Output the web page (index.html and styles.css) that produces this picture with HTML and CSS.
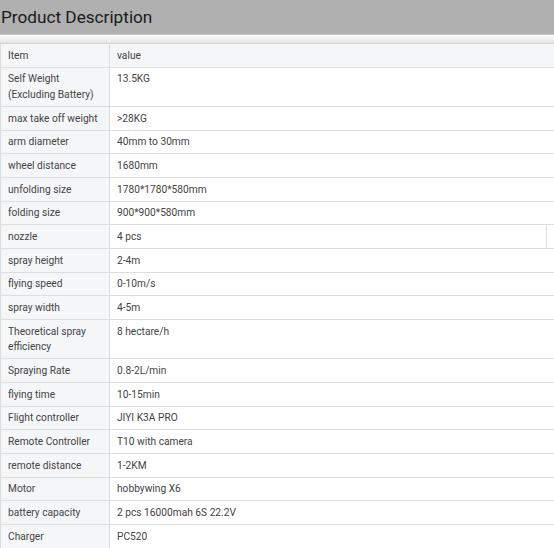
FILE: index.html
```html
<!DOCTYPE html>
<html>
<head>
<meta charset="utf-8">
<link rel="stylesheet" href="styles.css">
</head>
<body>
<div class="title-bar"><h2 class="title">Product Description</h2></div>
<div class="shade"></div>
<div class="table-wrap">
<table class="spec">
<colgroup><col class="c1"><col class="c2"><col class="c3"></colgroup>
<tr class="head"><td class="k">Item</td><td class="v" colspan="2">value</td></tr>
<tr><td class="k">Self Weight<br>(Excluding Battery)</td><td class="v" colspan="2">13.5KG</td></tr>
<tr><td class="k">max take off weight</td><td class="v" colspan="2">&gt;28KG</td></tr>
<tr><td class="k">arm diameter</td><td class="v" colspan="2">40mm to 30mm</td></tr>
<tr><td class="k">wheel distance</td><td class="v" colspan="2">1680mm</td></tr>
<tr><td class="k">unfolding size</td><td class="v" colspan="2">1780*1780*580mm</td></tr>
<tr><td class="k">folding size</td><td class="v" colspan="2">900*900*580mm</td></tr>
<tr><td class="k">nozzle</td><td class="v">4 pcs</td><td class="extra"></td></tr>
<tr><td class="k">spray height</td><td class="v" colspan="2">2-4m</td></tr>
<tr><td class="k">flying speed</td><td class="v" colspan="2">0-10m/s</td></tr>
<tr><td class="k">spray width</td><td class="v" colspan="2">4-5m</td></tr>
<tr><td class="k">Theoretical spray<br>efficiency</td><td class="v" colspan="2">8 hectare/h</td></tr>
<tr><td class="k">Spraying Rate</td><td class="v" colspan="2">0.8-2L/min</td></tr>
<tr><td class="k">flying time</td><td class="v" colspan="2">10-15min</td></tr>
<tr><td class="k">Flight controller</td><td class="v" colspan="2">JIYI K3A PRO</td></tr>
<tr><td class="k">Remote Controller</td><td class="v" colspan="2">T10 with camera</td></tr>
<tr><td class="k">remote distance</td><td class="v" colspan="2">1-2KM</td></tr>
<tr><td class="k">Motor</td><td class="v" colspan="2">hobbywing X6</td></tr>
<tr><td class="k">battery capacity</td><td class="v" colspan="2">2 pcs 16000mah 6S 22.2V</td></tr>
<tr><td class="k">Charger</td><td class="v" colspan="2">PC520</td></tr>
</table>
</div>
</body>
</html>
```
FILE: styles.css
```css
html, body {
  margin: 0;
  padding: 0;
  background: #ffffff;
  overflow: hidden;
}
body {
  font-family: Roboto, "Liberation Sans", sans-serif;
  width: 554px;
}
.title-bar {
  background: #b0b0b0;
  height: 34px;
  border-bottom: 1px solid #c2c2c2;
}
.title {
  margin: 0;
  padding: 5px 0 0 1px;
  font-size: 17.2px;
  font-weight: 400;
  line-height: 24px;
  color: #1a1a1a;
}
.shade {
  height: 8px;
  background: linear-gradient(#fbfbfb, #e6e6e6);
}
.table-wrap {
  width: 554px;
  overflow: hidden;
}
.spec {
  border-collapse: collapse;
  width: 620px;
  font-size: 10.2px;
  color: #444444;
  table-layout: fixed;
}
.spec col.c1 { width: 109px; }
.spec col.c2 { width: 437px; }
.spec col.c3 { width: 74px; }
.spec td {
  border: 1px solid #dedede;
  padding: 3.5px 7px 3.5px 7px;
  line-height: 15.67px;
  vertical-align: top;
  text-align: left;
  white-space: nowrap;
}
.spec .k {
  background: #f5f6f8;
  border-left: 1px solid #dcdcdc;
}
.spec .head td {
  background: #f5f6f8;
  border-top: 1px solid #d2d2d2;
}
.spec td.extra {
  padding: 0;
}
```
